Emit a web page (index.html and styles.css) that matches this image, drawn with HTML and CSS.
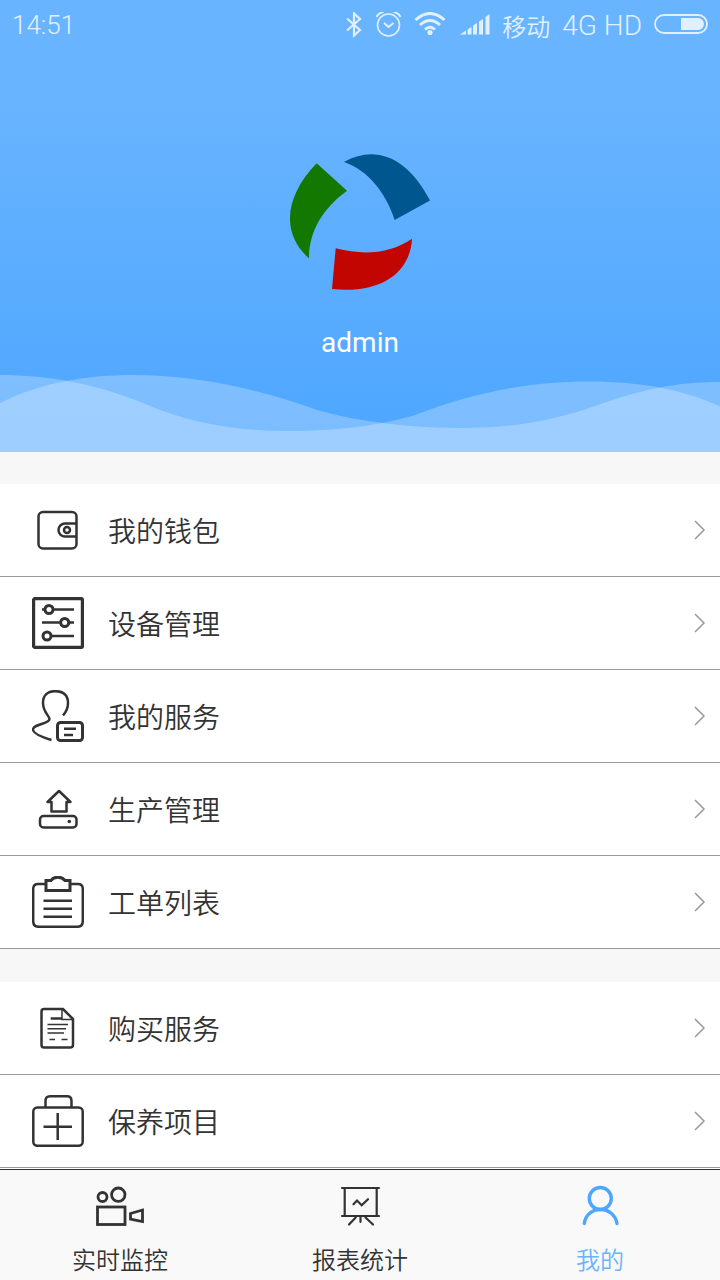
FILE: index.html
```html
<!DOCTYPE html>
<html lang="zh-CN">

<head>
    <meta charset="UTF-8">
    <meta name="viewport" content="width=device-width, initial-scale=1.0">
    <title>我的</title>
    <link rel="stylesheet" href="styles.css">
</head>

<body>
    <header class="profile">
        <div class="status-bar">
            <span class="time">14:51</span>
            <svg width="18" height="26" viewBox="0 0 18 26" fill="none" stroke="currentColor" stroke-width="2.200">
                <path d="M1 6.500l13 11.500-6 5.500V1.500l6 5.500L1 18.500" />
            </svg>
            <svg width="26" height="26" viewBox="0 0 26 26" fill="none" stroke="currentColor" stroke-width="1.600">
                <circle cx="12.500" cy="13" r="11" />
                <path d="M8 11l4.500 4 5-4" stroke-width="2" />
                <path d="M.500 5q2-4 7-5M24.500 5q-2-4-7-5" stroke-width="2" />
            </svg>
            <svg width="34" height="26" viewBox="0 0 34 26" fill="none" stroke="currentColor" stroke-width="3">
                <path d="M1.500 8q14.500-13 29 0M6 13q10-9 20 0M11 17.500q5-4.500 10 0" />
                <circle cx="16" cy="20.500" r="2.600" fill="currentColor" stroke="none" />
            </svg>
            <svg width="30" height="26" viewBox="0 0 30 26" fill="currentColor">
                <path d="M0 22.500l6-4v4zM7.500 17.500l4-2.500v7.500h-4zM13 13.500l4-2.500v11.500h-4zM19 9.500l4-2.500v15.500h-4zM25.500 5l4-3v20.500h-4z" />
            </svg>
            <span class="carrier">移动</span>
            <span class="network">4G HD</span>
            <svg width="54" height="26" viewBox="0 0 54 26">
                <rect x="1" y="3" width="52" height="18" rx="9" fill="none" stroke="currentColor" stroke-width="1.800" />
                <path d="M27 6h17a6 6 0 0 1 0 12H27z" fill="currentColor" />
            </svg>
        </div>
        <svg class="logo" viewBox="0 0 140 138">
            <path fill="#00568f" d="M54 9C86-9 118 5 140 47.500L104.700 67C96 40 78 17 54 9z" />
            <path fill="#137800" d="M26.700 10.300L57 37.700C32 56 19 79 19 105.300C-8 82-7 45 26.700 10.300z" />
            <path fill="#c30500" d="M45.700 95.300C75 103 101 100 122 85.700C120 122 88 141 42 136z" />
        </svg>
        <h1 class="user-name">admin</h1>
        <svg class="waves" viewBox="0 0 720 80" preserveAspectRatio="none">
            <path d="M0 3C50 3 95 12 143 31C190 52 240 59 287 59C345 59 385 52 415 43C470 22 525 9.500 590 9.500C640 9.500 685 18 720 34.500V80H0z" />
            <path d="M0 31C40 11 85 3 133 3C200 3 265 19 317 38C360 50 410 56 463 56C520 56 560 46 595 34C640 18 675 10 720 10V80H0z" />
        </svg>
    </header>

    <main class="content">
        <ul class="menu">
            <li>
                <a href="#">
                    <svg class="icon" viewBox="0 0 52 52">
                        <rect x="6.500" y="8" width="38" height="36.500" rx="4.500" />
                        <path d="M44 19.500H33a6.500 6.500 0 0 0 0 13H44" />
                        <circle cx="35" cy="26" r="3" />
                    </svg>
                    <span>我的钱包</span>
                    <svg class="arrow" viewBox="0 0 12 20"><path d="M1 1l9 9-9 9" /></svg>
                </a>
            </li>
            <li>
                <a href="#">
                    <svg class="icon" viewBox="0 0 52 52">
                        <rect x="1.500" y="1.500" width="49" height="49" rx="2" stroke-width="3.400" />
                        <path d="M10 12.500h3M21 12.500h21M10 25.500h18.500M37 25.500h5M19 39h23" />
                        <circle cx="17" cy="12.500" r="4" stroke-width="3" />
                        <circle cx="32.700" cy="25.500" r="4" stroke-width="3" />
                        <circle cx="15" cy="39" r="4" stroke-width="3" />
                    </svg>
                    <span>设备管理</span>
                    <svg class="arrow" viewBox="0 0 12 20"><path d="M1 1l9 9-9 9" /></svg>
                </a>
            </li>
            <li>
                <a href="#">
                    <svg class="icon" viewBox="0 0 52 52">
                        <path d="M31 25.500C35 21 36 17 36 13C36 5 31 1.200 23 1.200S11 6 11 13C11 22 17.500 26 17.500 29C17.500 34 1 34 1 39.500C1 44 11 47.500 19.500 50" />
                        <rect x="25.500" y="32.500" width="25" height="18" rx="3" stroke-width="3" />
                        <path d="M32 38.700h12M32 45h9" />
                    </svg>
                    <span>我的服务</span>
                    <svg class="arrow" viewBox="0 0 12 20"><path d="M1 1l9 9-9 9" /></svg>
                </a>
            </li>
            <li>
                <a href="#">
                    <svg class="icon" viewBox="0 0 52 52">
                        <path d="M27 8l11.500 11H34.500v9.500H19.500V19H15.500z" stroke-linejoin="round" />
                        <rect x="8" y="33" width="36.500" height="11.500" rx="3.500" />
                        <circle cx="37.300" cy="38.500" r="1.800" fill="#333" stroke="none" />
                    </svg>
                    <span>生产管理</span>
                    <svg class="arrow" viewBox="0 0 12 20"><path d="M1 1l9 9-9 9" /></svg>
                </a>
            </li>
            <li>
                <a href="#">
                    <svg class="icon" viewBox="0 0 52 52">
                        <path d="M14 8H6Q1.200 8 1.200 13V45Q1.200 50.800 7 50.800H45Q50.800 50.800 50.800 45V13Q50.800 8 46 8H38" />
                        <path d="M14 14.500V4.500H19C22 0 29.500 0 33 4.500H38V14.500z" stroke-width="3" />
                        <path d="M11.500 24.700h28.500M11.500 32.700h28.500M11.500 40.700h28.500" />
                    </svg>
                    <span>工单列表</span>
                    <svg class="arrow" viewBox="0 0 12 20"><path d="M1 1l9 9-9 9" /></svg>
                </a>
            </li>
        </ul>

        <ul class="menu">
            <li>
                <a href="#">
                    <svg class="icon" viewBox="0 0 52 52">
                        <path d="M12 7H31L41 17V43Q41 45.500 38 45.500H12Q9.500 45.500 9.500 43V9.500Q9.500 7 12 7z" />
                        <path d="M30 7V17.500H41" stroke-width="1.500" />
                        <path d="M18.700 16.500H30" />
                        <path d="M15.500 22.500H36M15.500 26.700H34M15.500 31H32M17.500 37.500H23M29.500 37.500H35.500" stroke-width="1.500" />
                    </svg>
                    <span>购买服务</span>
                    <svg class="arrow" viewBox="0 0 12 20"><path d="M1 1l9 9-9 9" /></svg>
                </a>
            </li>
            <li>
                <a href="#">
                    <svg class="icon" viewBox="0 0 52 52">
                        <rect x="1.300" y="12.500" width="49.400" height="38.300" rx="4" />
                        <path d="M13.500 12.500V6Q13.500 1.300 18 1.300H35Q39.500 1.300 39.500 6V12.500" />
                        <path d="M11.500 31.700H40M25.700 18V45" />
                    </svg>
                    <span>保养项目</span>
                    <svg class="arrow" viewBox="0 0 12 20"><path d="M1 1l9 9-9 9" /></svg>
                </a>
            </li>
        </ul>
    </main>

    <nav class="tab-bar">
        <a href="#">
            <svg viewBox="0 0 48 48">
                <circle cx="6.500" cy="14" r="4.500" />
                <circle cx="22.300" cy="11.700" r="6.700" />
                <rect x="1.500" y="24" width="27.500" height="17.500" />
                <path d="M34.500 30.500L46.500 27V38.500L34.500 36.200z" />
            </svg>
            <span>实时监控</span>
        </a>
        <a href="#">
            <svg class="thin" viewBox="0 0 48 48" stroke-linecap="round">
                <path d="M6 5h37M6 33h37" />
                <path d="M8.700 5v28M40.700 5v28" />
                <path d="M17.500 21.300L21 17.500L25.700 22.300L32 16.200" />
                <path d="M19.700 34.500L13 41.500M24.500 34v5M29.500 34.500L37 41.500" />
            </svg>
            <span>报表统计</span>
        </a>
        <a href="#" class="active">
            <svg viewBox="0 0 48 48" stroke-linecap="round">
                <circle cx="24.300" cy="15.500" r="11" />
                <path d="M8.300 40.500C9.500 32 16 26.500 24.300 26.500S39.500 32 41 40.500" />
            </svg>
            <span>我的</span>
        </a>
    </nav>
</body>

</html>
```
FILE: styles.css
```css
* {
    margin: 0;
    padding: 0;
    box-sizing: border-box;
}

body {
    display: flex;
    flex-direction: column;
    min-height: 100vh;
    font-family: Roboto, "Noto Sans CJK SC", sans-serif;
    color: #333;
    background-color: #f7f7f7;
}

a {
    color: inherit;
    text-decoration: none;
}

svg {
    display: block;
    flex-shrink: 0;
}

/* Header */
.profile {
    display: flex;
    flex-direction: column;
    align-items: center;
    background: linear-gradient(#69b4ff 20%, #4da6ff);
}

.status-bar {
    display: flex;
    align-items: center;
    gap: 12px;
    width: 100%;
    height: 50px;
    padding: 0 12px;
    color: #e1f0ff;
    font-size: 26px;
    font-weight: 350;
}

.time {
    margin-right: auto;
}

.carrier {
    font-size: 24px;
}

.network {
    font-size: 28px;
}

.logo {
    width: 140px;
    height: 138px;
    margin-top: 103px;
}

.user-name {
    margin: 36px 0 13px;
    font-size: 28px;
    font-weight: 400;
    line-height: 32px;
    color: #fff;
}

.waves {
    width: 100%;
    height: 80px;
    fill: #fff;
    fill-opacity: 0.26;
}

/* Menu */
.content {
    flex: 1;
    display: flex;
    flex-direction: column;
    gap: 33px;
    padding-top: 32px;
}

.menu {
    list-style: none;
    background-color: #fff;
}

.menu:last-child {
    flex: 1;
}

.menu a {
    display: flex;
    align-items: center;
    gap: 24px;
    height: 93px;
    padding: 0 14px 0 32px;
    border-bottom: 1px solid #999;
    font-size: 28px;
    font-weight: 350;
}

.icon {
    width: 52px;
    height: 52px;
    fill: none;
    stroke: #333;
    stroke-width: 2.5;
}

.arrow {
    width: 12px;
    height: 20px;
    margin-left: auto;
    fill: none;
    stroke: #999;
    stroke-width: 1.5;
}

/* Bottom tabs */
.tab-bar {
    display: flex;
    height: 111px;
    border-top: 1px solid #333;
    background-color: #f9f9f9;
}

.tab-bar a {
    flex: 1;
    display: flex;
    flex-direction: column;
    align-items: center;
    gap: 14px;
    padding-top: 13px;
    font-size: 24px;
    font-weight: 350;
    line-height: 32px;
}

.tab-bar svg {
    width: 48px;
    height: 48px;
    fill: none;
    stroke: #333;
    stroke-width: 2.8;
}

.tab-bar .thin {
    stroke-width: 2.2;
}

.tab-bar .active {
    color: #69b4ff;
}

.tab-bar .active svg {
    stroke: #4da6ff;
    stroke-width: 3.4;
}
```
